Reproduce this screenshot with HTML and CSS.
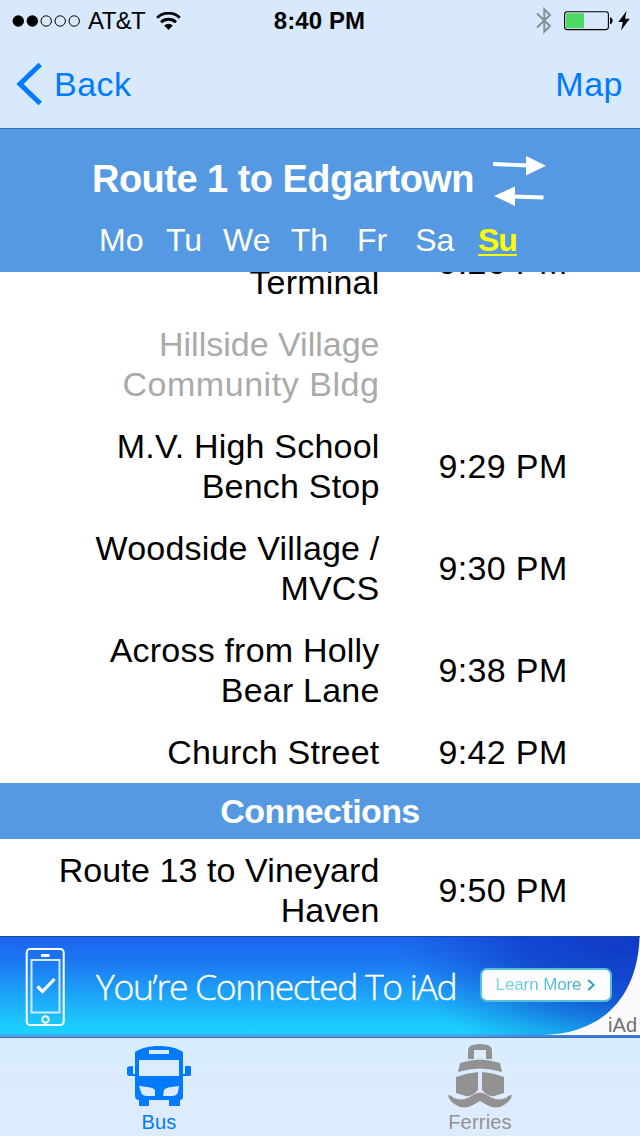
FILE: index.html
```html
<!DOCTYPE html>
<html lang="en">
<head>
<meta charset="utf-8">
<title>Route 1 to Edgartown</title>
<link rel="stylesheet" href="styles.css">
</head>
<body>
<div class="screen">
  <div class="status">
    <div class="status-left">
      <svg class="signal" width="68" height="14" viewBox="0 0 68 14">
        <circle cx="6.3" cy="7" r="5.7"/><circle cx="20.3" cy="7" r="5.7"/>
        <g fill="none" stroke="#000" stroke-width="1"><circle cx="34.2" cy="7" r="5.2"/><circle cx="48.2" cy="7" r="5.2"/><circle cx="62.2" cy="7" r="5.2"/></g>
      </svg>
      <span class="carrier">AT&amp;T</span>
      <svg class="wifi" width="25" height="18" viewBox="0 0 25 18">
        <g fill="none" stroke="#000" stroke-width="2.8"><path d="M1.2 5.800a16.2 16.2 0 0 1 22.6 0"/><path d="M5 10.2a11 11 0 0 1 15 0"/></g>
        <path d="M8.2 13.5a6.2 6.2 0 0 1 8.6 0L12.500 18z"/>
      </svg>
    </div>
    <div class="clock">8:40 PM</div>
    <div class="status-right">
      <svg width="16" height="27" viewBox="0 0 16 27"><path d="M1 6.500 14 19 8.300 24.700V2.300L14 8 1 20.500" fill="none" stroke="#878f99" stroke-width="2"/></svg>
      <svg class="battery" width="50" height="20" viewBox="0 0 50 20">
        <rect x=".6" y=".8" width="43.800" height="17.800" rx="2.500" fill="none" stroke="#000" stroke-width="1.100"/>
        <rect x="2" y="2.300" width="18" height="14.900" fill="#4cd964"/><path d="M46 6.300c3.600.8 3.600 6.100 0 6.900z"/>
      </svg>
      <svg class="bolt" width="12" height="20" viewBox="0 0 12 20"><path d="M8.500 0 .3 11h4.500L3 19.500 11.700 7.800H7z"/></svg>
    </div>
  </div>
  <div class="nav">
    <div class="back"><svg width="27" height="44" viewBox="0 0 27 44"><path d="M25.200 2.500 5 22 25.200 41.500" fill="none" stroke="#007aff" stroke-width="5"/></svg><span>Back</span></div>
    <span class="map">Map</span>
  </div>
  <div class="header">
    <div class="title-row">
      <h1>Route 1 to Edgartown</h1>
      <svg width="54" height="52" viewBox="0 0 54 52"><g fill="none" stroke="#fff" stroke-width="3.800"><path d="M1 14 36 15.500"/><path d="M20 46.500 51.500 47.500"/></g><path d="M34 6 54 15.800 34 25.500zM23 36.500 2 46 23 56z" fill="#fff"/></svg>
    </div>
    <div class="days"><span>Mo</span><span>Tu</span><span>We</span><span>Th</span><span>Fr</span><span>Sa</span><span class="today">Su</span></div>
  </div>
  <div class="list">
    <div class="rows">
      <div class="row"><div class="stop">Airport<br>Terminal</div><div class="time">9:26 PM</div></div>
      <div class="row skipped"><div class="stop">Hillside Village<br><span class="wide">Community Bldg</span></div><div class="time"></div></div>
      <div class="row"><div class="stop">M.V. High School<br>Bench Stop</div><div class="time">9:29 PM</div></div>
      <div class="row"><div class="stop">Woodside Village /<br>MVCS</div><div class="time">9:30 PM</div></div>
      <div class="row"><div class="stop">Across from Holly<br>Bear Lane</div><div class="time">9:38 PM</div></div>
      <div class="row last"><div class="stop">Church Street</div><div class="time">9:42 PM</div></div>
      <h2>Connections</h2>
      <div class="row connection"><div class="stop">Route 13 to Vineyard<br>Haven</div><div class="time">9:50 PM</div></div>
    </div>
  </div>
  <div class="ad">
    <svg class="ad-corner" width="100" height="98" viewBox="0 0 100 98"><path d="M99.500 0C98 56 66 97 2 98H100V0z" fill="#fbf9fc"/></svg>
    <svg class="phone" width="40" height="80" viewBox="0 0 40 80" fill="none" stroke="#fff" stroke-width="2"><rect x="1.700" y="2" width="37" height="76" rx="3.500"/><rect x="6.500" y="13" width="28" height="52.500" stroke="#d2e9ff"/><path d="M16 8.500h8.500" stroke-width="3"/><circle cx="20.500" cy="72.500" r="3.200"/><path d="m12.500 39.500 5 5 12-12.500" stroke-width="3.200"/></svg>
    <span class="ad-text">You’re Connected To iAd</span>
    <div class="learn"><span>Learn More</span><svg width="9" height="12" viewBox="0 0 9 12"><path d="m1.200 1 5.500 5-5.500 5" fill="none" stroke="#2d9ac4" stroke-width="1.800"/></svg></div>
    <span class="iad">iAd</span>
  </div>
  <div class="tabs">
    <div class="tab active">
      <svg width="64" height="62" viewBox="0 0 64 62"><path fill="#007aff" fill-rule="evenodd" d="M8 12V6C14 2 22 0 32 0s18 2 24 6v22h2v-8h5q1 0 1 1v8q0 1-4 1h-4v20q0 4-3 4v6H42v-6H22v6H12v-6q-4 0-4-4V30H4q-4 0-4-2v-6q0-2 6-2v8h2zM22 4v4h20V4zM12 14v16h40V14zM12 40l2 6q1 4 6 4h8v-6q-1-3-16-4zM52 40q-14 1-15 4l-1 6h9q5 0 6-4z"/></svg>
      <span>Bus</span>
    </div>
    <div class="tab">
      <svg width="64" height="66" viewBox="0 0 64 66"><g fill="#929292"><path d="M20 16V7q0-6 12-6t12 6v9h-6V7H26v9z"/><path d="M10 29l2-9q20-7 40 0l2 9q-22-7-44 0z"/><path d="M8 50V34q11-4 22-5v18q-8 9-15 5zM34 29q12 1 22 5v16l-7 2q-7 4-15-5z"/><path d="M0 52q3 0 6 3 9 4 19-3 7-5 14 0 10 7 19 3 3-3 6-3-1 6-8 10-8 5-17 0l-7-4-7 4q-9 5-17 0-7-4-8-10z"/></g></svg>
      <span>Ferries</span>
    </div>
  </div>
</div>
</body>
</html>
```
FILE: styles.css
```css
* { box-sizing: border-box; }
body { margin: 0; background: #fff; font-family: "Liberation Sans", Arial, sans-serif; color: #000; }
svg { display: block; flex: none; }
.screen { width: 640px; height: 1136px; display: flex; flex-direction: column; overflow: hidden; }
.status { height: 40px; background: #d8e9fe; display: grid; grid-template-columns: 1fr auto 1fr; align-items: center; padding: 1px 10px 0 12px; white-space: nowrap; }
.status-left { display: flex; align-items: center; }
.carrier { font-size: 24px; letter-spacing: -.6px; margin-left: 8px; }
.wifi { margin-left: 11px; }
.clock { font-size: 24px; font-weight: bold; letter-spacing: .1px; margin-right: 3px; }
.status-right { display: flex; align-items: center; justify-content: flex-end; }
.battery { margin-left: 12px; }
.bolt { margin-left: 4px; }
.nav { height: 89px; background: #d8e9fe; border-bottom: 1px solid #386daf; display: flex; justify-content: space-between; align-items: center; padding: 0 17px 0 15px; color: #007aff; font-size: 34px; }
.back { display: flex; align-items: center; gap: 12px; letter-spacing: .5px; }
.map { letter-spacing: .5px; }
.header { height: 143px; background: #5499e2; color: #fff; padding-top: 24px; }
.title-row { display: flex; height: 54px; gap: 18px; padding-left: 92px; }
.title-row svg { overflow: visible; margin-top: -3px; }
h1 { margin: 0; font-size: 38px; line-height: 53px; letter-spacing: -.53px; white-space: nowrap; }
.days { display: grid; grid-template-columns: repeat(7, 62.7px); margin-left: 90px; text-align: center; font-size: 32px; line-height: 67px; }
.today { color: #ff0; font-weight: bold; text-decoration: underline; text-decoration-thickness: 2px; text-underline-offset: 3px; letter-spacing: -1px; }
.list { height: 664px; overflow: hidden; background: #fff; }
.rows { margin-top: -60px; font-size: 34px; line-height: 40px; letter-spacing: .2px; }
.row { display: grid; grid-template-columns: 379.500px 1fr; column-gap: 59px; align-items: center; padding: 10px 0 12px; }
.row.last { padding-bottom: 11px; }
.row.connection { letter-spacing: .1px; }
.stop { text-align: right; }
.time { letter-spacing: .35px; }
.skipped { color: #aaa; letter-spacing: 0; }
.wide { letter-spacing: .55px; }
h2 { margin: 0 0 1px; height: 56px; background: #5499e2; color: #fff; text-align: center; font-size: 34px; line-height: 56px; letter-spacing: -.6px; }
.ad { position: relative; height: 102px; border-top: 1px solid #174a9e; border-bottom: 1px solid #386daf; display: flex; align-items: center; padding-left: 25px; background: radial-gradient(ellipse 240px 150px at 640px -10px, #103cc8 0 12%, rgba(16,60,200,.75) 50%, rgba(16,60,200,.25) 80%, rgba(16,60,200,0)), linear-gradient(#1c64ef, #1c78f3 25%, #1da9f8 62%, #1acffc 92%, #1acffc 97%, #5499e2 98%); }
.ad-corner { position: absolute; right: 0; top: 0; }
.ad-text { margin-left: 31px; margin-top: -2px; width: 360px; color: #fff; font: 300 35.500px "Open Sans", sans-serif; letter-spacing: -1.300px; white-space: nowrap; -webkit-text-stroke: .4px #fff; }
.learn { position: relative; margin-left: 24px; margin-top: -5px; width: 132px; height: 34px; border: 2px solid #54bfd9; border-radius: 7px; background: #fdfdff; display: flex; align-items: center; justify-content: center; gap: 6px; font-size: 17px; letter-spacing: -.1px; }
.learn span { white-space: nowrap; background: linear-gradient(90deg, #7bd9df, #42adce); background-clip: text; color: transparent; }
.iad { position: absolute; right: 3px; bottom: 0; font-size: 20px; color: #707070; }
.tabs { height: 98px; display: grid; grid-template-columns: 1fr 1fr; background: linear-gradient(#d7edfd, #dcebfd 55%); }
.tab { display: flex; flex-direction: column; align-items: center; justify-content: flex-end; gap: 2px; padding-bottom: 3px; font-size: 20px; line-height: 22px; color: #929292; letter-spacing: .2px; }
.tab.active { color: #007aff; padding-right: 2px; gap: 3px; }
```
